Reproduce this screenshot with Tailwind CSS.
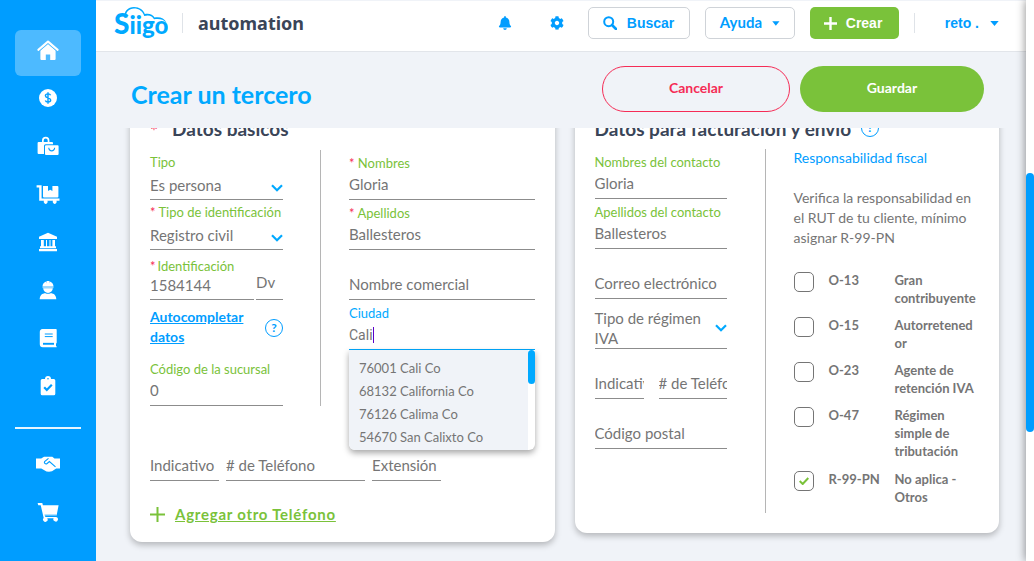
<!DOCTYPE html>
<html lang="es">
<head>
<meta charset="utf-8">
<title>Crear un tercero</title>
<script src="https://cdn.jsdelivr.net/npm/@tailwindcss/browser@4"></script>
</head>
<body class="flex h-screen overflow-hidden bg-[#f0f3f8] font-['Lato',sans-serif] text-[#757575]">

<nav aria-label="Principal" class="flex w-24 shrink-0 flex-col items-center bg-[#009dff] pt-[30px] text-white">
  <a href="#" aria-label="Inicio" class="flex h-[46px] w-[66px] items-center justify-center rounded-md bg-[#4dbaff] pb-1.5">
    <svg class="h-6 w-6" viewBox="0 0 24 24" fill="currentColor"><path d="M12 5.8 4.4 12.400V21a1 1 0 0 0 1 1h4.400v-5.400h4.400V22h4.400a1 1 0 0 0 1-1v-8.600z"/><path d="M2.400 11.900 12 3.700l9.600 8.200" fill="none" stroke="currentColor" stroke-width="2.200" stroke-linecap="round" stroke-linejoin="round"/><path d="M3 13.400 12 5.700l9 7.700" fill="none" stroke="#4dbaff" stroke-width=".8"/></svg>
  </a>
  <a href="#" aria-label="Ventas" class="flex h-12 items-center pb-1">
    <svg class="h-6 w-6" viewBox="0 0 24 24"><circle cx="12" cy="12" r="9" fill="currentColor"/><path d="M14.600 9.200c-.4-.9-1.400-1.300-2.600-1.300-1.500 0-2.600.7-2.600 1.900 0 2.700 5.300 1.500 5.300 4.300 0 1.200-1.100 2-2.700 2-1.300 0-2.300-.5-2.700-1.500M12 6.300v11.400" fill="none" stroke="#009dff" stroke-width="1.400"/></svg>
  </a>
  <a href="#" aria-label="Compras" class="flex h-12 items-center pb-1">
    <svg class="h-6 w-6" viewBox="0 0 24 24" fill="currentColor"><path d="M6 8V6.500a3.700 3.700 0 0 1 7.400 0V8H16a1 1 0 0 1 1 1v1.200H9.600a1.600 1.600 0 0 0-1.600 1.600V20H2.600a1 1 0 0 1-1-1V9a1 1 0 0 1 1-1zm1.700 0h4V6.500a2 2 0 0 0-4 0z"/><path fill-rule="evenodd" d="M10 11.200h11.600a1 1 0 0 1 1 1V20a1 1 0 0 1-1 1H10a1 1 0 0 1-1-1v-7.800a1 1 0 0 1 1-1zm2.200 2.600c0 4.800 7 4.800 7 0h-1.100c0 3.300-4.800 3.300-4.800 0z"/></svg>
  </a>
  <a href="#" aria-label="Inventario" class="flex h-12 items-center pb-1">
    <svg class="h-6 w-6" viewBox="0 0 24 24" fill="currentColor"><path d="M.6 3.200h5v13.400h17.900v2.200h-3.100a2 2 0 1 1-3.400 0h-5.600a2 2 0 1 1-3.400 0H3.200V5.600H.6z"/><path d="M7 4h5v5l2.200-1.300L16.400 9V4h5a1 1 0 0 1 1 1v9.400a1 1 0 0 1-1 1H8a1 1 0 0 1-1-1z"/></svg>
  </a>
  <a href="#" aria-label="Bancos" class="flex h-12 items-center pb-1">
    <svg class="h-6 w-6" viewBox="0 0 24 24" fill="currentColor"><path d="m12 2.800 9 3.900v2.200H3V6.700zM5 10h2.800v6.200h2.200V10h1v6.200h2.500V10h1v6.200h1.900V10H19v6.200h1v2H4v-2h1zM3 19h18v2.300H3z"/></svg>
  </a>
  <a href="#" aria-label="Nómina" class="flex h-12 items-center pb-1">
    <svg class="h-6 w-6" viewBox="0 0 24 24" fill="currentColor"><path d="M6.500 8.600c0-2.500 1.600-4.400 3.700-5.100l.4 2V3h2.800v2.500l.4-2c2.100.7 3.700 2.600 3.700 5.100zM7.200 10.200h9.600a4.800 4.800 0 0 1-9.600 0z"/><path d="M6.500 8.600h11v1.600h-11z" opacity=".6"/><path d="M3.700 21.300c0-4 2.500-6.100 5.700-6.100 1.700.7 3.500.7 5.200 0 3.200 0 5.700 2.100 5.700 6.100z"/></svg>
  </a>
  <a href="#" aria-label="Contabilidad" class="flex h-12 items-center pb-1">
    <svg class="h-6 w-6" viewBox="0 0 24 24"><path d="M6.500 3H20a.7.7 0 0 1 .7.700v13.100l-.7 1V20l.7.500v.8H6.800A3 3 0 0 1 3.800 18.300V6A3 3 0 0 1 6.500 3z" fill="currentColor"/><path d="M8.800 8h7.900M8.800 10.600h7.900" stroke="#009dff" stroke-width="1"/><path d="M7 17.800h11" stroke="#009dff" stroke-width="1.900"/></svg>
  </a>
  <a href="#" aria-label="Tareas" class="flex h-12 items-center pb-1">
    <svg class="h-6 w-6" viewBox="0 0 24 24"><path d="M6.200 5H9a3 3 0 0 1 6 0h2.800A1.500 1.500 0 0 1 19.300 6.500v13.200a1.500 1.500 0 0 1-1.500 1.500H6.200a1.500 1.500 0 0 1-1.500-1.500V6.500A1.500 1.500 0 0 1 6.200 5z" fill="currentColor"/><circle cx="12" cy="4.800" r=".8" fill="#009dff"/><path d="m8.200 13.200 2.600 2.700 5-5.200" fill="none" stroke="#009dff" stroke-width="2.200"/></svg>
  </a>
  <hr class="mt-[15px] mb-[13px] w-[66px] border-0 border-t-2 border-white/90">
  <a href="#" aria-label="Alianzas" class="flex h-12 items-center pb-1">
    <svg class="h-6 w-6" viewBox="0 0 24 24"><path d="M0 6.600h5.200L8 4.800h8.300l2.200 1.800H24v9.900h-3.800L16 19.300l-3 .5-2.500-.2L5.300 16.500H0z" fill="currentColor"/><path d="M12.500 6.300 8.600 9.600c-.9 1.700 1.100 2.900 2.500 1.900l2.300-2 6.100 5.300" fill="none" stroke="#009dff" stroke-width="1.100"/></svg>
  </a>
  <a href="#" aria-label="Tienda" class="flex h-12 items-center pb-1">
    <svg class="h-6 w-6" viewBox="0 0 24 24" fill="currentColor"><path d="M1.600 3h4.700l.6 2.300h15.700l-2 10.200H9l.3 1.500h10.900a2.300 2.300 0 1 1-2.600 1.200h-6.400a2.300 2.300 0 1 1-3.500-.3L4.700 5.200H2.300z"/><path d="M8.500 15h12" stroke="#009dff" stroke-width=".6"/></svg>
  </a>
</nav>

<main class="flex min-w-0 flex-1 flex-col pt-px">
  <header class="flex h-[51px] shrink-0 items-center border-b border-[#e2e5ea] bg-white pb-1.5">
    <a href="#" aria-label="Siigo" class="ml-[18px]">
      <svg class="h-9 w-[54px]" viewBox="0 0 54 36" fill="#00a9ff"><text x="0" y="29" font-family="Lato" font-weight="900" font-size="24"><tspan font-size="28">S</tspan>iigo</text><path d="M10.500 13C9.500 6 14 2 20 2c5.500 0 9.500 3 10.800 7 4-1 8.200.3 9.700 3.500 5-1.200 9.800.5 12 5-3.300-3.300-7.500-4.200-12.500-3.200-1.500-3.300-5-4.700-9.800-3.300C28.700 6 25 3.500 20 3.500c-5 0-8.500 3.500-8.200 9.500z"/></svg>
    </a>
    <span class="ml-[14px] h-5 border-l border-[#dfe3e8]"></span>
    <span class="ml-[15px] font-['Noto_Sans',sans-serif] text-lg font-bold text-[#3a4558]">automation</span>
    <div class="ml-auto flex items-center text-sm font-bold text-[#009dff]">
      <button type="button" aria-label="Notificaciones" class="mr-[38px]"><svg class="h-[14px] w-[14px]" viewBox="0 0 448 512" fill="currentColor"><path d="M224 512c35.320 0 63.970-28.650 63.970-64H160.030c0 35.350 28.650 64 63.970 64zm215.390-149.710c-19.320-20.760-55.470-51.990-55.470-154.290 0-77.700-54.480-139.900-127.940-155.160V32c0-17.670-14.320-32-31.980-32s-31.980 14.330-31.980 32v20.840C118.560 68.100 64.080 130.300 64.080 208c0 102.300-36.150 133.530-55.470 154.290-6 6.450-8.660 14.160-8.610 21.710.11 16.400 12.980 32 32.100 32h383.800c19.120 0 32-15.600 32.100-32 .05-7.550-2.610-15.270-8.610-21.710z"/></svg></button>
      <button type="button" aria-label="Configuración" class="mr-6"><svg class="h-[14px] w-[14px]" viewBox="0 0 512 512" fill="currentColor"><path d="M487.400 315.700l-42.600-24.600c4.300-23.200 4.300-47 0-70.200l42.600-24.600c4.900-2.800 7.100-8.600 5.500-14-11.100-35.600-30-67.800-54.700-94.600-3.800-4.100-10-5.100-14.800-2.300L380.800 110c-17.900-15.400-38.500-27.300-60.800-35.100V25.800c0-5.600-3.900-10.500-9.400-11.700-36.700-8.200-74.300-7.800-109.200 0-5.500 1.200-9.400 6.100-9.400 11.700V75c-22.200 7.900-42.800 19.800-60.800 35.100L88.700 85.500c-4.900-2.800-11-1.900-14.800 2.300-24.700 26.700-43.600 58.900-54.700 94.600-1.700 5.400.6 11.200 5.500 14L67.300 221c-4.300 23.200-4.300 47 0 70.200l-42.600 24.600c-4.900 2.800-7.100 8.600-5.500 14 11.100 35.600 30 67.800 54.700 94.600 3.800 4.100 10 5.100 14.800 2.300l42.600-24.600c17.900 15.400 38.500 27.300 60.800 35.100v49.200c0 5.600 3.900 10.500 9.400 11.700 36.700 8.200 74.300 7.800 109.200 0 5.500-1.200 9.400-6.100 9.400-11.700v-49.200c22.200-7.900 42.800-19.800 60.800-35.100l42.600 24.600c4.900 2.800 11 1.900 14.800-2.300 24.700-26.700 43.600-58.900 54.700-94.600 1.500-5.500-.7-11.300-5.600-14.100zM256 336c-44.100 0-80-35.900-80-80s35.900-80 80-80 80 35.900 80 80-35.900 80-80 80z"/></svg></button>
      <button type="button" class="mr-[15px] flex h-8 w-[102px] items-center gap-[10px] rounded-[5px] border border-[#cfd3d8] px-3.5 font-['Liberation_Sans',sans-serif]">
        <svg class="h-[14px] w-[14px]" viewBox="0 0 14 14" fill="none" stroke="currentColor" stroke-width="2"><circle cx="5.700" cy="5.700" r="4.500"/><path d="m9 9 4 4" stroke-width="2.600" stroke-linecap="round"/></svg>Buscar</button>
      <button type="button" class="mr-[15px] flex h-8 w-[90px] items-center gap-[10px] rounded-[5px] border border-[#cfd3d8] px-3.5 text-[15px]">Ayuda
        <svg class="h-[5px] w-[9px]" viewBox="0 0 9 5" fill="currentColor"><path d="M.3 0h8.400L4.500 5z"/></svg></button>
      <button type="button" class="mr-[15px] flex h-8 w-[89px] items-center gap-[9px] rounded-[5px] bg-[#7ac23a] px-3.5 font-['Liberation_Sans',sans-serif] text-white">
        <svg class="h-[13px] w-[13px]" viewBox="0 0 13 13" stroke="currentColor" stroke-width="2.400"><path d="M6.500 0v13M0 6.500h13"/></svg>Crear</button>
      <span class="mr-[30px] h-5 border-l border-[#dfe3e8]"></span>
      <button type="button" class="mr-[27px] flex items-center gap-[11px] font-['Liberation_Sans',sans-serif]">reto .
        <svg class="h-[5px] w-[9px]" viewBox="0 0 9 5" fill="currentColor"><path d="M.3 0h8.400L4.500 5z"/></svg></button>
    </div>
  </header>

  <div class="flex h-[76px] shrink-0 items-center gap-[10px] pr-[42px] pb-0.5 pl-[35px]">
    <h1 class="mt-[10px] mr-auto text-[25px] leading-8 font-bold text-[#00a9ff]">Crear un tercero</h1>
    <button type="button" class="h-[46px] w-[188px] rounded-full border border-[#f52c56] pb-0.5 text-sm font-bold text-[#f52c56]">Cancelar</button>
    <button type="button" class="h-[46px] w-[184px] rounded-full bg-[#7ac23a] pb-0.5 text-sm font-bold text-white">Guardar</button>
  </div>

  <div class="min-h-0 flex-1 overflow-hidden">
    <form class="-mt-5 grid grid-cols-2 items-start gap-5 pr-[27px] pl-[34px]">

      <section class="rounded-xl bg-white px-5 pt-[9px] pb-4 shadow-[0_3px_6px_#00000040]">
        <h2 class="flex h-[33px] items-start gap-[14px] text-[19px] leading-6 font-bold text-[#3a4558]"><span class="mt-0.5 font-normal text-[#f52c56]">*</span>Datos básicos</h2>
        <div class="flex">
          <div class="w-[171px] shrink-0 border-r border-[#b5b5b5] pr-[37px]">
            <div class="relative flex h-[50px] flex-col pt-1">
              <label for="tipo" class="text-[13px] leading-4 text-[#7ac23a]">Tipo</label>
              <select id="tipo" class="mt-0.5 h-7 w-full appearance-none border-b border-[#8c8c8c] text-[15px]"><option>Es persona</option></select>
              <svg class="pointer-events-none absolute right-0 bottom-2 h-2 w-3" viewBox="0 0 12 8" fill="none" stroke="#00a9ff" stroke-width="2.200"><path d="m1 1.200 5 5 5-5"/></svg>
            </div>
            <div class="relative flex h-[50px] flex-col pt-1">
              <label for="tipoid" class="text-[13px] leading-4 whitespace-nowrap text-[#7ac23a]"><span class="text-[#f52c56]">*</span> Tipo de identificación</label>
              <select id="tipoid" class="mt-0.5 h-7 w-full appearance-none border-b border-[#8c8c8c] text-[15px]"><option>Registro civil</option></select>
              <svg class="pointer-events-none absolute right-0 bottom-2 h-2 w-3" viewBox="0 0 12 8" fill="none" stroke="#00a9ff" stroke-width="2.200"><path d="m1 1.200 5 5 5-5"/></svg>
            </div>
            <div class="flex h-[50px] items-end gap-0.5">
              <div class="flex min-w-0 flex-1 flex-col">
                <label for="ident" class="text-[13px] leading-4 text-[#7ac23a]"><span class="mr-0.5 text-[#f52c56]">*</span>Identificación</label>
                <input id="ident" value="1584144" class="h-[26px] w-full border-b border-[#8c8c8c] pb-1 text-[15px]">
              </div>
              <input aria-label="Dv" placeholder="Dv" class="h-[34px] w-[27px] border-b border-[#8c8c8c] pb-0.5 text-[15px] placeholder:text-[#757575]">
            </div>
            <div class="flex h-14 items-center justify-between">
              <a href="#" class="w-[100px] pb-0.5 text-sm leading-5 font-bold text-[#009dff] underline">Autocompletar datos</a>
              <button type="button" aria-label="Ayuda" class="h-[18px] w-[18px] rounded-full border border-[#009dff] text-xs leading-4 font-bold text-[#009dff]">?</button>
            </div>
            <div class="flex h-[50px] flex-col pt-[5px]">
              <label for="suc" class="text-[13px] leading-4 text-[#7ac23a]">Código de la sucursal</label>
              <input id="suc" value="0" class="h-[29px] w-full border-b border-[#8c8c8c] pb-0.5 text-[15px]">
            </div>
          </div>
          <div class="min-w-0 flex-1 pl-7">
            <div class="flex h-[50px] flex-col pt-[5px]">
              <label for="nom" class="text-[13px] leading-4 text-[#7ac23a]"><span class="text-[#f52c56]">*</span> Nombres</label>
              <input id="nom" value="Gloria" class="h-[29px] w-full border-b border-[#8c8c8c] pb-0.5 text-[15px]">
            </div>
            <div class="flex h-[50px] flex-col pt-[5px]">
              <label for="ape" class="text-[13px] leading-4 text-[#7ac23a]"><span class="text-[#f52c56]">*</span> Apellidos</label>
              <input id="ape" value="Ballesteros" class="h-[29px] w-full border-b border-[#8c8c8c] pb-0.5 text-[15px]">
            </div>
            <div class="flex h-[50px] flex-col justify-end">
              <input aria-label="Nombre comercial" placeholder="Nombre comercial" class="h-[29px] w-full border-b border-[#8c8c8c] pb-0.5 text-[15px] placeholder:text-[#757575]">
            </div>
            <div class="relative flex h-[50px] flex-col pt-[5px]">
              <label for="ciu" class="text-[13px] leading-4 text-[#00a9ff]">Ciudad</label>
              <div class="flex h-[29px] items-center border-b border-[#00a9ff]">
                <input id="ciu" value="Cali" class="field-sizing-content font-['Roboto',sans-serif] text-[14px] outline-none"><span class="h-4 w-px bg-[#5b00c8]"></span>
              </div>
              <div class="absolute inset-x-0 top-full flex h-[100px] rounded-b-md bg-white shadow-[0_3px_6px_#00000059]">
                <ul class="flex-1 overflow-hidden rounded-bl-md bg-[#f0f3f8] pt-[7px] pl-[10px] text-[13px] leading-[23px]">
                  <li>76001 Cali Co</li>
                  <li>68132 California Co</li>
                  <li>76126 Calima Co</li>
                  <li>54670 San Calixto Co</li>
                </ul>
                <div class="w-[7px]"><div class="h-[34px] rounded-full bg-[#00a9ff]"></div></div>
              </div>
            </div>
          </div>
        </div>
        <div class="mt-11 grid w-[291px] grid-cols-[69fr_139fr_69fr] gap-[7px] text-[15px]">
          <input aria-label="Indicativo" placeholder="Indicativo" class="h-[31px] w-full border-b border-[#8c8c8c] placeholder:text-[#757575]">
          <input aria-label="# de Teléfono" placeholder="# de Teléfono" class="h-[31px] w-full border-b border-[#8c8c8c] placeholder:text-[#757575]">
          <input aria-label="Extensión" placeholder="Extensión" class="h-[31px] w-full border-b border-[#8c8c8c] placeholder:text-[#757575]">
        </div>
        <a href="#" class="mt-[21px] flex items-center gap-[10px] text-[15px] leading-6 font-bold text-[#7ac23a]">
          <svg class="h-[15px] w-[15px]" viewBox="0 0 15 15" stroke="currentColor" stroke-width="2"><path d="M7.500 0v15M0 7.500h15"/></svg>
          <span class="tracking-wider underline">Agregar otro Teléfono</span></a>
      </section>

      <section class="rounded-xl bg-white px-5 pt-[9px] pb-5 shadow-[0_3px_6px_#00000040]">
        <h2 class="flex h-8 items-start gap-[10px] text-[19px] leading-6 font-bold whitespace-nowrap text-[#3a4558]">Datos para facturación y envío
          <button type="button" aria-label="Ayuda" class="mt-0.5 h-[18px] w-[18px] rounded-full border border-[#009dff] text-xs leading-4 font-bold text-[#009dff]">?</button></h2>
        <div class="flex">
          <div class="w-[171px] shrink-0 border-r border-[#b5b5b5] pr-[38px]">
            <div class="flex h-[50px] flex-col pt-[5px]">
              <label for="nomc" class="text-[13px] leading-4 text-[#7ac23a]">Nombres del contacto</label>
              <input id="nomc" value="Gloria" class="h-[29px] w-full border-b border-[#8c8c8c] pb-0.5 text-[15px]">
            </div>
            <div class="flex h-[50px] flex-col pt-[5px]">
              <label for="apec" class="text-[13px] leading-4 text-[#7ac23a]">Apellidos del contacto</label>
              <input id="apec" value="Ballesteros" class="h-[29px] w-full border-b border-[#8c8c8c] pb-0.5 text-[15px]">
            </div>
            <div class="flex h-[50px] flex-col justify-end">
              <input aria-label="Correo electrónico" placeholder="Correo electrónico" class="h-[29px] w-full border-b border-[#8c8c8c] pb-0.5 text-[15px] placeholder:text-[#757575]">
            </div>
            <button type="button" aria-haspopup="listbox" class="flex h-[50px] w-full items-center justify-between border-b border-[#8c8c8c] pt-2 text-left text-[15px] leading-5">
              <span class="w-[110px]">Tipo de régimen IVA</span>
              <svg class="h-2 w-3" viewBox="0 0 12 8" fill="none" stroke="#00a9ff" stroke-width="2.200"><path d="m1 1.200 5 5 5-5"/></svg>
            </button>
            <div class="flex h-[50px] items-end gap-[15px] text-[15px]">
              <input aria-label="Indicativo" placeholder="Indicativo" class="h-[29px] w-[49px] border-b border-[#8c8c8c] pb-0.5 placeholder:text-[#757575]">
              <input aria-label="# de Teléfono" placeholder="# de Teléfono" class="h-[29px] min-w-0 flex-1 border-b border-[#8c8c8c] pb-0.5 placeholder:text-[#757575]">
            </div>
            <div class="flex h-[50px] flex-col justify-end">
              <input aria-label="Código postal" placeholder="Código postal" class="h-[29px] w-full border-b border-[#8c8c8c] pb-0.5 text-[15px] placeholder:text-[#757575]">
            </div>
          </div>
          <div class="min-w-0 flex-1 pb-[7px] pl-7">
            <h3 class="text-sm leading-[18px] text-[#009dff]">Responsabilidad fiscal</h3>
            <p class="mt-[21px] text-sm leading-5">Verifica la responsabilidad en el RUT de tu cliente, mínimo asignar R-99-PN</p>
            <div class="mt-[23px] flex flex-col gap-[9px] text-[13px] leading-[18px] font-bold">
              <label class="flex items-start"><input type="checkbox" class="mt-px mr-[15px] h-5 w-5 shrink-0 appearance-none rounded-[5px] border border-[#757575]"><span class="w-[66px] shrink-0">O-13</span><span class="min-w-0 flex-1 break-words">Gran contribuyente</span></label>
              <label class="flex items-start"><input type="checkbox" class="mt-px mr-[15px] h-5 w-5 shrink-0 appearance-none rounded-[5px] border border-[#757575]"><span class="w-[66px] shrink-0">O-15</span><span class="min-w-0 flex-1 break-all">Autorretenedor</span></label>
              <label class="flex items-start"><input type="checkbox" class="mt-px mr-[15px] h-5 w-5 shrink-0 appearance-none rounded-[5px] border border-[#757575]"><span class="w-[66px] shrink-0">O-23</span><span class="min-w-0 flex-1 break-words">Agente de retención IVA</span></label>
              <label class="flex items-start pb-px"><input type="checkbox" class="mt-px mr-[15px] h-5 w-5 shrink-0 appearance-none rounded-[5px] border border-[#757575]"><span class="w-[66px] shrink-0">O-47</span><span class="min-w-0 flex-1 break-words">Régimen simple de tributación</span></label>
              <label class="relative flex items-start"><input type="checkbox" checked class="mt-px mr-[15px] h-5 w-5 shrink-0 appearance-none rounded-[5px] border border-[#757575]"><svg class="pointer-events-none absolute top-[7px] left-[5px] h-2 w-[10px]" viewBox="0 0 10 8" fill="none" stroke="#7ac23a" stroke-width="2"><path d="m.7 4 3 3 5.600-6"/></svg><span class="w-[66px] shrink-0">R-99-PN</span><span class="min-w-0 flex-1 break-words">No aplica - Otros</span></label>
            </div>
          </div>
        </div>
      </section>
    </form>
  </div>
</main>

<div aria-hidden="true" class="z-10 w-2 shrink-0 bg-white pt-[173px] shadow-[0_0_10px_#00000080]">
  <div class="h-[259px] rounded-full bg-[#009dff]"></div>
</div>
</body>
</html>
